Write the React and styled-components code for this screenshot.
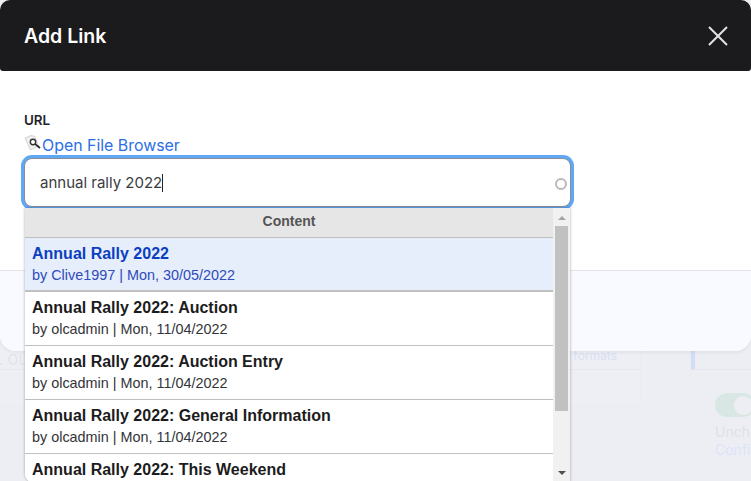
import React from 'react'
import styled, { createGlobalStyle } from 'styled-components'

const results = [
  { title: 'Annual Rally 2022', author: 'Clive1997', date: 'Mon, 30/05/2022', active: true },
  { title: 'Annual Rally 2022: Auction', author: 'olcadmin', date: 'Mon, 11/04/2022' },
  { title: 'Annual Rally 2022: Auction Entry', author: 'olcadmin', date: 'Mon, 11/04/2022' },
  { title: 'Annual Rally 2022: General Information', author: 'olcadmin', date: 'Mon, 11/04/2022' },
  { title: 'Annual Rally 2022: This Weekend', author: 'olcadmin', date: 'Mon, 11/04/2022' },
]

const App = () => {
  return (
    <Page>
      <GlobalStyle />
      <Behind>
        <FormatsCard>
          <CardRow>
            <FaintText>L OL</FaintText>
            <FormatsText>formats</FormatsText>
          </CardRow>
        </FormatsCard>
        <BehindRight>
          <FaintPanel />
          <Toggle><Knob /></Toggle>
          <FaintLine>Unchecked</FaintLine>
          <FaintLink>Configure</FaintLink>
        </BehindRight>
      </Behind>
      <Dialog>
        <Header>
          <Title>Add Link</Title>
          <CloseButton aria-label="Close">
            <svg width="20" height="20" viewBox="0 0 20 20">
              <path d="M1 1L19 19M19 1L1 19" stroke="#e4e4e4" strokeWidth="2" fill="none" />
            </svg>
          </CloseButton>
        </Header>
        <Body>
          <Label>URL</Label>
          <BrowseRow>
            <FileIcon />
            <BrowseLink href="#">Open File Browser</BrowseLink>
          </BrowseRow>
          <InputWrap>
            <Input>
              annual rally 2022<Caret />
            </Input>
            <Throbber />
            <Dropdown>
              <Results>
                <Heading>Content</Heading>
                {results.map((r) => (
                  <Row key={r.title} $active={r.active}>
                    <RowTitle $active={r.active}>{r.title}</RowTitle>
                    <RowMeta $active={r.active}>by {r.author} | {r.date}</RowMeta>
                  </Row>
                ))}
              </Results>
              <Scrollbar>
                <ScrollArrow $up />
                <ScrollThumb />
                <ScrollArrow />
              </Scrollbar>
            </Dropdown>
          </InputWrap>
        </Body>
        <Footer />
      </Dialog>
    </Page>
  )
}

const FileIcon = () => (
  <svg width="18" height="18" viewBox="0 0 18 18">
    <path d="M1 3L7 0.5L11 1.5L14.5 11L6.5 15Z" fill="#f0f0f0" stroke="#c4c4c4" strokeWidth="0.7" />
    <circle cx="9" cy="7" r="2.7" fill="#fff" stroke="#333" strokeWidth="1.4" />
    <path d="M11.2 9.2L16 13" stroke="#222" strokeWidth="1.7" />
  </svg>
)

const GlobalStyle = createGlobalStyle`
  html, body {
    margin: 0;
    padding: 0;
    background: #edeef3;
    font-family: Inter, "Liberation Sans", sans-serif;
  }
`
const Page = styled.div`
  position: relative;
  width: 751px;
  height: 481px;
  overflow: hidden;
  background: #edeef3;
`
const Behind = styled.div`
  display: flex;
  align-items: flex-start;
  height: 481px;
  box-sizing: border-box;
  padding-top: 300px;
`
const FormatsCard = styled.div`
  width: 641px;
  height: 106px;
  flex: none;
  box-sizing: border-box;
  background: #eeeff4;
  border-right: 1px solid #ebecf1;
  border-bottom: 1px solid #ebecf1;
  border-radius: 0 0 8px 0;
`
const CardRow = styled.div`
  height: 70px;
  box-sizing: border-box;
  display: flex;
  justify-content: space-between;
  border-bottom: 1px solid #e7e8ed;
`
const FaintText = styled.div`
  margin-top: 50px;
  margin-left: -5px;
  font-size: 14px;
  line-height: 20px;
  letter-spacing: 0.3px;
  color: #e2e3e8;
`
const FormatsText = styled.div`
  margin-top: 48px;
  margin-right: 23px;
  font-size: 12px;
  line-height: 16px;
  color: #d9e0f2;
`
const BehindRight = styled.div`
  position: relative;
  flex: 1;
  height: 181px;
  margin-left: 49px;
  padding-left: 24px;
  border-left: 1px solid #ecedf2;
  white-space: nowrap;
  overflow: hidden;
`
const FaintPanel = styled.div`
  position: absolute;
  left: 0;
  top: 0;
  right: 0;
  height: 70px;
  box-sizing: border-box;
  border-left: 4px solid #d3def3;
  border-bottom: 1px solid #e6e7ec;
`
const Toggle = styled.div`
  margin-top: 93px;
  width: 40px;
  height: 24px;
  border-radius: 12px;
  background: #d9e7e4;
  display: flex;
  justify-content: flex-end;
  align-items: center;
  padding-right: 2px;
  box-sizing: border-box;
`
const Knob = styled.div`
  width: 19px;
  height: 19px;
  border-radius: 50%;
  background: #edeef3;
`
const FaintLine = styled.div`
  margin-top: 6px;
  font-size: 14px;
  line-height: 18px;
  color: #e0e1e6;
`
const FaintLink = styled.div`
  font-size: 14px;
  line-height: 18px;
  color: #dbe4f8;
`
const Dialog = styled.div`
  position: absolute;
  left: 0;
  top: 0;
  width: 751px;
  height: 351px;
  display: flex;
  flex-direction: column;
  background: #fff;
  border-radius: 16px;
  box-shadow: 0 1px 4px rgba(30, 30, 60, 0.08);
`
const Header = styled.div`
  height: 71px;
  flex: none;
  display: flex;
  align-items: center;
  justify-content: space-between;
  box-sizing: border-box;
  padding: 0 23px 0 24px;
  background: #1b1b1d;
  border-radius: 10px 10px 3px 3px;
`
const Title = styled.h2`
  margin: 0;
  color: #fff;
  font-size: 19.5px;
  font-weight: 600;
`
const CloseButton = styled.button`
  display: flex;
  padding: 0;
  border: 0;
  background: none;
`
const Body = styled.div`
  height: 199px;
  flex: none;
  box-sizing: border-box;
  padding: 41px 24px 0;
`
const Label = styled.div`
  font-size: 13.4px;
  font-weight: 600;
  line-height: 16px;
  color: #232429;
`
const BrowseRow = styled.div`
  display: flex;
  align-items: flex-start;
  height: 22px;
  margin-top: 7px;
`
const BrowseLink = styled.a`
  font-size: 15.9px;
  line-height: 22px;
  color: #2b6fe6;
  text-decoration: none;
`
const InputWrap = styled.div`
  position: relative;
  width: 547px;
`
const Input = styled.div`
  box-sizing: border-box;
  height: 49px;
  display: flex;
  align-items: center;
  padding-left: 15px;
  margin-top: 1px;
  font-size: 15px;
  color: #3b3c42;
  background: #fff;
  border: 1px solid #8b8d99;
  border-radius: 8px;
  box-shadow: 0 0 0 3px #5fa8f5;
`
const Caret = styled.span`
  display: inline-block;
  width: 1px;
  height: 18px;
  background: #222;
`
const Throbber = styled.span`
  position: absolute;
  right: 4px;
  top: 20px;
  width: 12px;
  height: 12px;
  box-sizing: border-box;
  border: 2px solid #b9b9b9;
  border-radius: 50%;
`
const Dropdown = styled.div`
  position: absolute;
  left: 1px;
  top: 50px;
  width: 545px;
  height: 274px;
  display: flex;
  background: #fff;
  border-radius: 0 0 0 8px;
  overflow: hidden;
  box-shadow: 0 0 3px rgba(0, 0, 0, 0.35);
  font-family: "Liberation Sans", Arial, sans-serif;
`
const Results = styled.div`
  flex: 1;
  min-width: 0;
`
const Heading = styled.div`
  height: 30px;
  line-height: 27px;
  box-sizing: border-box;
  text-align: center;
  font-size: 14px;
  font-weight: 700;
  color: #555;
  background: #e6e6e6;
  border-bottom: 1px solid #bdbdbd;
`
const Row = styled.div`
  height: 54px;
  box-sizing: border-box;
  padding: 6px 7px 0;
  background: ${(p) => (p.$active ? '#e6edfb' : '#fff')};
  border-bottom: ${(p) => (p.$active ? '2px' : '1px')} solid #c0c0c0;
`
const RowTitle = styled.div`
  font-size: 16px;
  font-weight: 700;
  line-height: 20px;
  color: ${(p) => (p.$active ? '#0b3fc0' : '#1c1c20')};
`
const RowMeta = styled.div`
  font-size: 14.4px;
  line-height: 20px;
  margin-top: 1px;
  color: ${(p) => (p.$active ? '#2f4bbd' : '#33343a')};
`
const Scrollbar = styled.div`
  width: 17px;
  flex: none;
  display: flex;
  flex-direction: column;
  align-items: center;
  background: #f1f1f1;
`
const ScrollThumb = styled.div`
  width: 13px;
  height: 185px;
  background: #c1c1c1;
  margin-top: 4px;
`
const ScrollArrow = styled.div`
  width: 0;
  height: 0;
  border-left: 4px solid transparent;
  border-right: 4px solid transparent;
  ${(p) => (p.$up
    ? 'border-bottom: 4px solid #a3a3a3; margin-top: 8px; margin-bottom: 2px;'
    : 'border-top: 4px solid #505050; margin-top: auto; margin-bottom: 7px;')}
`
const Footer = styled.div`
  flex: 1;
  background: #f9faff;
  border-top: 1px solid #e4e5ea;
  border-radius: 0 0 16px 16px;
`

export default App
